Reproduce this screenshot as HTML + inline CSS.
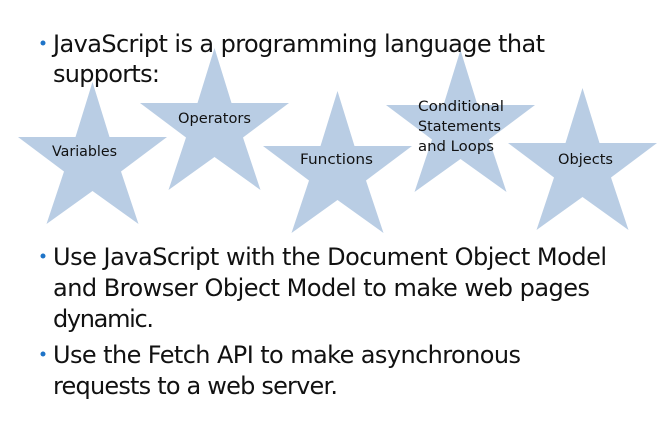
<!DOCTYPE html>
<html><head><meta charset="utf-8"><style>
html,body{margin:0;padding:0;background:#fff;width:670px;height:447px;overflow:hidden}
svg{display:block}
text{font-family:"DejaVu Sans","Liberation Sans",sans-serif;fill:#111}
.b{font-size:24px}
.s{font-size:14px}
</style></head><body>
<svg width="670" height="447" viewBox="0 0 670 447">
<defs>
<polygon id="st" points="74.5,0 91.5,55 149,55 103,89.5 120.5,142 74.5,109 28.5,142 46,89.5 0,55 57.5,55"/>
</defs>
<g fill="#b9cde4">
<use href="#st" x="18" y="82"/>
<use href="#st" x="140" y="48"/>
<use href="#st" x="263" y="91"/>
<use href="#st" x="386" y="50"/>
<use href="#st" x="508" y="88"/>
</g>
<g fill="#1e74c8">
<circle cx="43" cy="43" r="2.5"/>
<circle cx="43" cy="256" r="2.5"/>
<circle cx="43" cy="354" r="2.5"/>
</g>
<text class="b" x="53" y="52" textLength="492" lengthAdjust="spacing">JavaScript is a programming language that</text>
<text class="b" x="53" y="82" textLength="107" lengthAdjust="spacing">supports:</text>
<text class="b" x="53" y="265" textLength="554" lengthAdjust="spacing">Use JavaScript with the Document Object Model</text>
<text class="b" x="53" y="296" textLength="537" lengthAdjust="spacing">and Browser Object Model to make web pages</text>
<text class="b" x="53" y="327" textLength="101" lengthAdjust="spacing">dynamic.</text>
<text class="b" x="53" y="363" textLength="468" lengthAdjust="spacing">Use the Fetch API to make asynchronous</text>
<text class="b" x="53" y="394" textLength="285" lengthAdjust="spacing">requests to a web server.</text>
<text class="s" x="52" y="156" textLength="65" lengthAdjust="spacingAndGlyphs">Variables</text>
<text class="s" x="178" y="123" textLength="73" lengthAdjust="spacingAndGlyphs">Operators</text>
<text class="s" x="300" y="164" textLength="73" lengthAdjust="spacingAndGlyphs">Functions</text>
<text class="s" x="418" y="111" textLength="86" lengthAdjust="spacingAndGlyphs">Conditional</text>
<text class="s" x="418" y="131" textLength="83" lengthAdjust="spacingAndGlyphs">Statements</text>
<text class="s" x="418" y="151" textLength="76" lengthAdjust="spacingAndGlyphs">and Loops</text>
<text class="s" x="558" y="164" textLength="55" lengthAdjust="spacingAndGlyphs">Objects</text>
</svg>
</body></html>
